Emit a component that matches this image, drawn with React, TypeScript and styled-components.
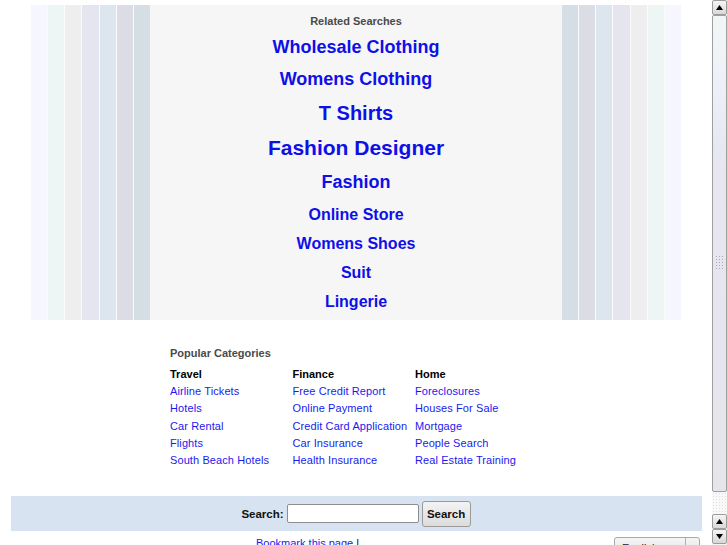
import React from "react";
import styled, { createGlobalStyle } from "styled-components";

const GlobalStyle = createGlobalStyle`
  html, body { margin: 0; padding: 0; background: #ffffff; overflow: hidden; }
  body { font-family: "Liberation Sans", Arial, Helvetica, sans-serif; }
  * { box-sizing: border-box; }
`;

const Frame = styled.div`
  display: flex;
  width: 727px;
  height: 545px;
  overflow: hidden;
  background: #fff;
`;

const Main = styled.div`
  flex: 1;
  display: flex;
  flex-direction: column;
  align-items: center;
  padding-top: 5px;
  min-width: 0;
`;

const Band = styled.div`
  display: flex;
  width: 650px;
  height: 315px;
  flex-shrink: 0;
`;

const StripeGroup = styled.div`
  display: flex;
  gap: 1px;
  width: 119px;
  background: #fbfbfb;
`;

const Stripe = styled.div<{ $c: string }>`
  flex: 1;
  background: ${(p) => p.$c};
`;

const Center = styled.div`
  flex: 1;
  background: #f6f6f6;
  display: flex;
  flex-direction: column;
  align-items: center;
  padding-top: 9px;
`;

const SmallHead = styled.div`
  font-size: 11px;
  font-weight: bold;
  color: #4a4a4a;
  line-height: 14px;
`;

const RelHead = styled(SmallHead)`
  margin-bottom: 3.5px;
`;

const BigLink = styled.a<{ $size: number; $h: number }>`
  display: block;
  font-size: ${(p) => p.$size}px;
  line-height: ${(p) => p.$h}px;
  height: ${(p) => p.$h}px;
  font-weight: bold;
  color: #0f0fe8;
  text-decoration: none;
  white-space: nowrap;
`;

const Categories = styled.div`
  width: 372px;
  margin-top: 26px;
  flex-shrink: 0;
`;

const CatHead = styled(SmallHead)`
  margin-bottom: 6px;
`;

const CatGrid = styled.div`
  display: grid;
  grid-template-columns: 122.5px 122.5px 1fr;
`;

const Col = styled.div`
  display: flex;
  flex-direction: column;
`;

const ColHead = styled.div`
  font-size: 11px;
  font-weight: bold;
  color: #000;
  line-height: 17.2px;
`;

const CatLink = styled.a`
  font-size: 11px;
  color: #1a1aee;
  line-height: 17.2px;
  text-decoration: none;
  white-space: nowrap;
  letter-spacing: 0.1px;
`;

const SearchBar = styled.div`
  width: 691px;
  height: 35px;
  margin-top: 26.8px;
  background: #d7e3f0;
  display: flex;
  align-items: center;
  justify-content: center;
  flex-shrink: 0;
`;

const Label = styled.label`
  font-size: 11.5px;
  font-weight: bold;
  color: #111;
`;

const Input = styled.input`
  width: 132px;
  height: 19px;
  margin-left: 3px;
  border: 1px solid #8e8e8e;
  border-radius: 2px;
  background: #fff;
  padding: 0 3px;
  font-family: inherit;
`;

const Button = styled.button`
  width: 49px;
  height: 26px;
  margin-left: 3px;
  border: 1px solid #9a9a9a;
  border-radius: 3px;
  background: linear-gradient(#f3f3f3, #dcdcdc);
  font-family: inherit;
  font-size: 11.5px;
  font-weight: bold;
  color: #111;
  padding: 0;
`;

const Footer = styled.div`
  width: 712px;
  display: flex;
  align-items: flex-start;
  margin-top: 5px;
  padding-left: 256px;
  flex-shrink: 0;
`;

const Bookmark = styled.a`
  font-size: 11px;
  line-height: 14px;
  color: #1a1aee;
  text-decoration: underline;
`;

const Pipe = styled.span`
  font-size: 11px;
  line-height: 14px;
  color: #000;
  margin-left: 3px;
`;

const Select = styled.div`
  margin-left: auto;
  margin-right: 12px;
  margin-top: 1px;
  width: 86px;
  height: 20px;
  border: 1px solid #a8a8a8;
  border-radius: 3px;
  background: linear-gradient(#f6f6f6, #e2e2e2);
  display: flex;
  font-size: 11px;
  color: #222;
`;

const SelectText = styled.span`
  flex: 1;
  padding: 4px 0 0 7px;
`;

const SelectArrow = styled.span`
  width: 14px;
  border-left: 1px solid #b0b0b0;
`;

/* fake browser scrollbar */
const ScrollBar = styled.div`
  width: 15px;
  height: 545px;
  display: flex;
  flex-direction: column;
  background: #f4f4f4;
  flex-shrink: 0;
`;

const ArrowBtn = styled.div`
  width: 15px;
  height: 15px;
  border: 1px solid #9c9c9c;
  border-radius: 2px;
  background: linear-gradient(#f5f5f5, #d8d8d8);
  display: flex;
  align-items: center;
  justify-content: center;
  flex-shrink: 0;
`;

const Thumb = styled.div`
  height: 477px;
  border: 1px solid #9f9f9f;
  border-radius: 2px;
  background: linear-gradient(
    #f1f7f6 0%,
    #eef2f8 12%,
    #e6e7ef 30%,
    #e5e5ec 100%
  );
  display: flex;
  flex-direction: column;
  align-items: center;
  padding-top: 239px;
  flex-shrink: 0;
`;

const Grip = styled.div`
  width: 9px;
  height: 14px;
  background-image: radial-gradient(circle, #a8a8b0 0.8px, transparent 1px);
  background-size: 3px 3px;
`;

const Track = styled.div`
  flex: 0 0 22px;
  background-image: radial-gradient(circle, #e2e2e2 0.6px, transparent 0.8px);
  background-size: 3px 3px;
  background-color: #f8f8f8;
`;

const Tri = ({ down }: { down?: boolean }) => (
  <svg width="7" height="5" viewBox="0 0 7 5">
    <path d={down ? "M0 0 H7 L3.5 5 Z" : "M0 5 H7 L3.5 0 Z"} fill="#000" />
  </svg>
);

const leftColors = ["#f5f6fe", "#eef6f5", "#eeeeee", "#e5e5ef", "#dde5ef", "#dcdce5", "#d5dde5"];

const related: { t: string; s: number; h: number }[] = [
  { t: "Wholesale Clothing", s: 18, h: 31 },
  { t: "Womens Clothing", s: 18, h: 33 },
  { t: "T Shirts", s: 20, h: 34 },
  { t: "Fashion Designer", s: 21, h: 35 },
  { t: "Fashion", s: 18, h: 35 },
  { t: "Online Store", s: 16, h: 29 },
  { t: "Womens Shoes", s: 16, h: 29 },
  { t: "Suit", s: 16, h: 29 },
  { t: "Lingerie", s: 16, h: 29 },
];

const cats: { head: string; items: string[] }[] = [
  { head: "Travel", items: ["Airline Tickets", "Hotels", "Car Rental", "Flights", "South Beach Hotels"] },
  { head: "Finance", items: ["Free Credit Report", "Online Payment", "Credit Card Application", "Car Insurance", "Health Insurance"] },
  { head: "Home", items: ["Foreclosures", "Houses For Sale", "Mortgage", "People Search", "Real Estate Training"] },
];

export default function App() {
  return (
    <>
      <GlobalStyle />
      <Frame>
        <Main>
          <Band>
            <StripeGroup>
              {leftColors.map((c, i) => (
                <Stripe key={i} $c={c} />
              ))}
            </StripeGroup>
            <Center>
              <RelHead>Related Searches</RelHead>
              {related.map((r) => (
                <BigLink key={r.t} href="#" $size={r.s} $h={r.h}>
                  {r.t}
                </BigLink>
              ))}
            </Center>
            <StripeGroup>
              {[...leftColors].reverse().map((c, i) => (
                <Stripe key={i} $c={c} />
              ))}
            </StripeGroup>
          </Band>

          <Categories>
            <CatHead>Popular Categories</CatHead>
            <CatGrid>
              {cats.map((c) => (
                <Col key={c.head}>
                  <ColHead>{c.head}</ColHead>
                  {c.items.map((it) => (
                    <CatLink key={it} href="#">
                      {it}
                    </CatLink>
                  ))}
                </Col>
              ))}
            </CatGrid>
          </Categories>

          <SearchBar>
            <Label>Search:</Label>
            <Input type="text" />
            <Button>Search</Button>
          </SearchBar>

          <Footer>
            <Bookmark href="#">Bookmark this page</Bookmark>
            <Pipe>|</Pipe>
            <Select>
              <SelectText>English</SelectText>
              <SelectArrow />
            </Select>
          </Footer>
        </Main>

        <ScrollBar>
          <ArrowBtn>
            <Tri />
          </ArrowBtn>
          <Thumb>
            <Grip />
          </Thumb>
          <Track />
          <ArrowBtn>
            <Tri />
          </ArrowBtn>
          <ArrowBtn>
            <Tri down />
          </ArrowBtn>
        </ScrollBar>
      </Frame>
    </>
  );
}
